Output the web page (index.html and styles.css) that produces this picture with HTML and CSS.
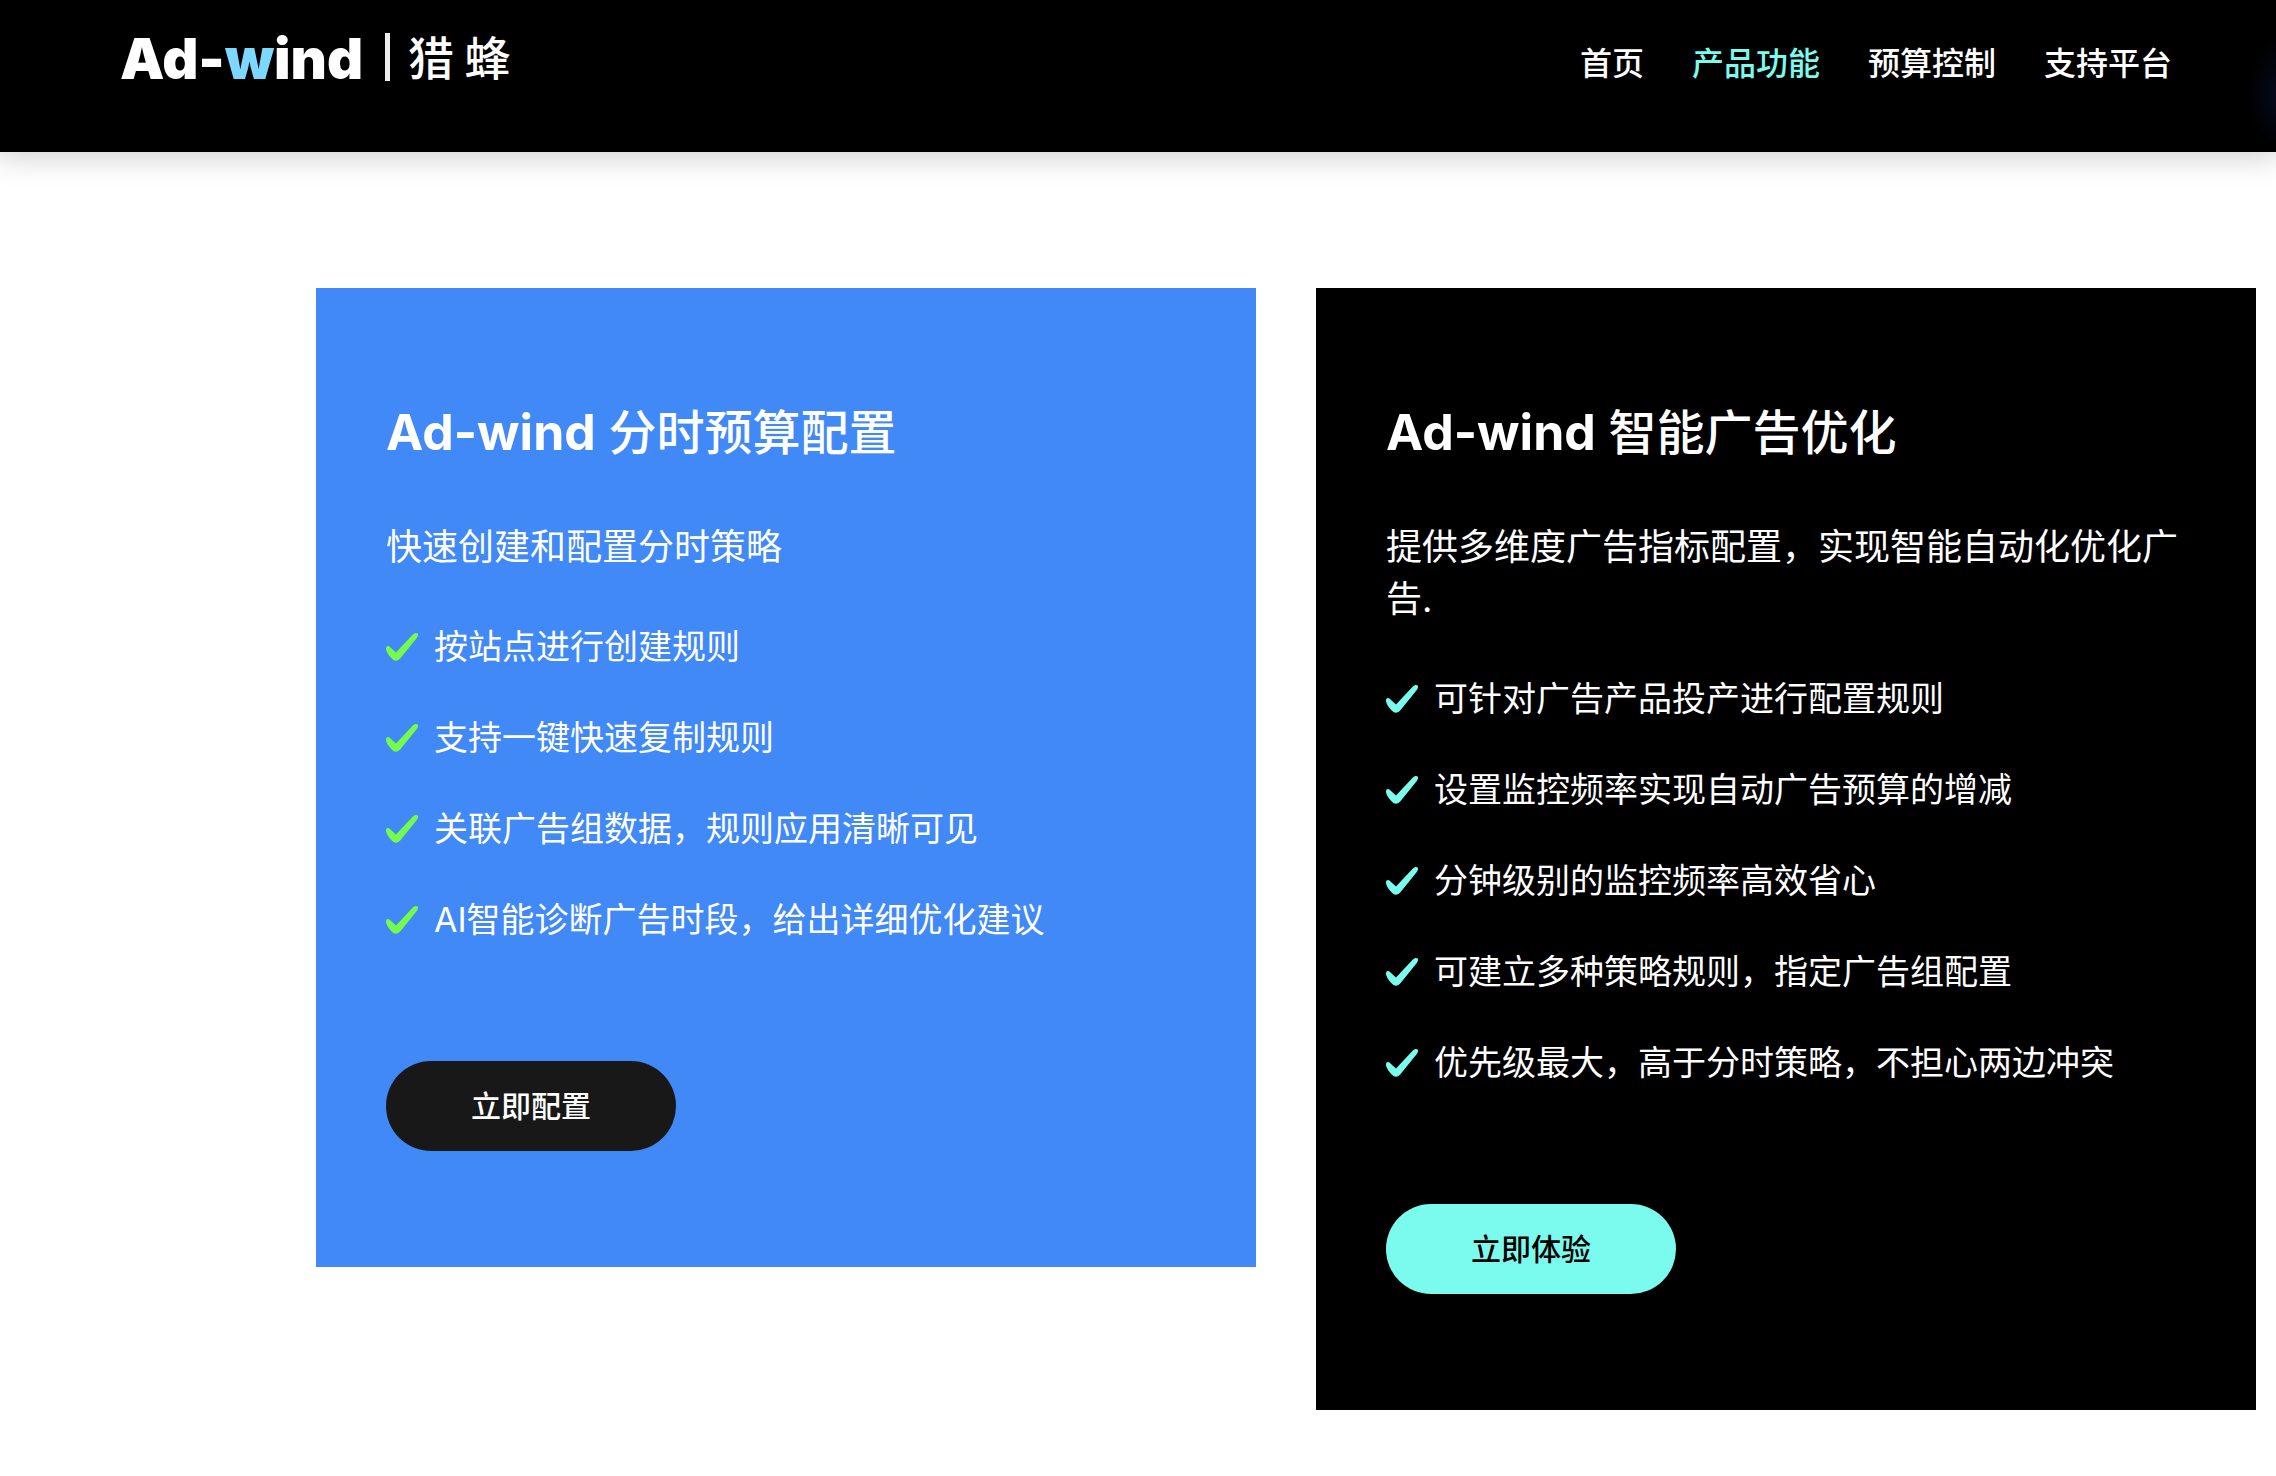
FILE: index.html
```html
<!DOCTYPE html>
<html lang="zh-CN">
<head>
    <meta charset="UTF-8">
    <meta name="viewport" content="width=device-width, initial-scale=1.0">
    <title>Ad-wind | 猎蜂</title>
    <link rel="stylesheet" href="styles.css">
</head>
<body>

    <!-- check icon shared by both lists -->
    <svg class="sprite" aria-hidden="true">
        <symbol id="check" viewBox="0 0 32 28">
            <path d="M0 15.500C0 13 2.400 12.300 4.200 14.200L10 19.600L26.400 2C28.400 .1 30.600-.4 31.600 .6C32.500 1.600 32 3.500 30.600 5.200L14.400 25.200C12.300 27.800 8.600 28.800 6 25.800C3 22.800 0 18.600 0 15.500Z"/>
        </symbol>
    </svg>

    <header class="header">
        <a class="logo" href="#">
            <span class="logo-name">Ad-<span class="logo-w">w</span>ind</span>
            <span class="logo-line"></span>
            <span class="logo-cn">猎 蜂</span>
        </a>
        <nav class="nav">
            <a href="#">首页</a>
            <a href="#" class="active">产品功能</a>
            <a href="#">预算控制</a>
            <a href="#">支持平台</a>
        </nav>
    </header>

    <main class="features">
        <section class="card card-blue">
            <h2><span class="brand">Ad-wind</span> 分时预算配置</h2>
            <p>快速创建和配置分时策略</p>
            <ul>
                <li><svg class="check"><use href="#check"/></svg>按站点进行创建规则</li>
                <li><svg class="check"><use href="#check"/></svg>支持一键快速复制规则</li>
                <li><svg class="check"><use href="#check"/></svg>关联广告组数据，规则应用清晰可见</li>
                <li><svg class="check"><use href="#check"/></svg>AI智能诊断广告时段，给出详细优化建议</li>
            </ul>
            <button type="button">立即配置</button>
        </section>

        <section class="card card-black">
            <h2><span class="brand">Ad-wind</span> 智能广告优化</h2>
            <p>提供多维度广告指标配置，实现智能自动化优化广告.</p>
            <ul>
                <li><svg class="check"><use href="#check"/></svg>可针对广告产品投产进行配置规则</li>
                <li><svg class="check"><use href="#check"/></svg>设置监控频率实现自动广告预算的增减</li>
                <li><svg class="check"><use href="#check"/></svg>分钟级别的监控频率高效省心</li>
                <li><svg class="check"><use href="#check"/></svg>可建立多种策略规则，指定广告组配置</li>
                <li><svg class="check"><use href="#check"/></svg>优先级最大，高于分时策略，不担心两边冲突</li>
            </ul>
            <button type="button">立即体验</button>
        </section>
    </main>

</body>
</html>
```
FILE: styles.css
```css
* {
    box-sizing: border-box;
}
body {
    margin: 0;
    background-color: #fff;
    font-family: Inter, "Noto Sans CJK SC", sans-serif;
    color: #fff;
}
.sprite {
    display: none;
}
.header {
    display: flex;
    justify-content: space-between;
    align-items: flex-start;
    padding: 22px 104px 60px 120px;
    background: radial-gradient(ellipse 28px 56px at 100% 94px, #050a1c, transparent) #000;
    box-shadow: 0 0 30px 4px rgba(0, 0, 0, 0.2);
}
.logo {
    display: flex;
    align-items: center;
    color: #fff;
    text-decoration: none;
    line-height: 66px;
}
.logo-name {
    padding-top: 4px;
    font-size: 56px;
    font-weight: 900;
}
.logo-w {
    color: #7dd8ff;
}
.logo-line {
    width: 5px;
    height: 48px;
    margin: 0 18px 0 22px;
    background-color: #eee;
}
.logo-cn {
    padding-bottom: 4px;
    font-family: "Noto Sans CJK SC", sans-serif;
    font-size: 46px;
    font-weight: 500;
}
.nav {
    display: flex;
    gap: 48px;
    padding-top: 18px;
}
.nav a {
    color: #fff;
    font-size: 32px;
    font-weight: 500;
    line-height: 48px;
    text-decoration: none;
}
.nav a.active {
    color: #7afbee;
}
.features {
    display: grid;
    grid-template-columns: 1fr 1fr;
    gap: 60px;
    align-items: start;
    padding: 136px 20px 66px 316px;
}
.card {
    padding: 108px 70px 116px;
}
.card h2 {
    margin: 0 0 52px;
    font-size: 48px;
    font-weight: 500;
    line-height: 72px;
}
.brand {
    font-size: 50px;
    font-weight: 700;
}
.card p {
    margin: 0 0 48px;
    font-size: 36px;
    line-height: 52px;
}
.card ul {
    display: grid;
    gap: 40px;
    margin: 0 0 116px;
    padding: 0;
    list-style: none;
}
.card li {
    display: flex;
    align-items: center;
    gap: 16px;
    font-size: 34px;
    line-height: 51px;
}
.check {
    width: 32px;
    height: 28px;
    flex-shrink: 0;
}
.card button {
    display: block;
    width: 290px;
    height: 90px;
    padding: 0 0 4px;
    border: none;
    border-radius: 45px;
    font-family: inherit;
    font-size: 30px;
    font-weight: 500;
    cursor: pointer;
}
.card-blue {
    background-color: #4189f7;
}
.card-blue .check {
    fill: #75fb4c;
}
.card-blue button {
    background-color: #181818;
    color: #fff;
}
.card-black {
    background-color: #000;
}
.card-black .check {
    fill: #7afbee;
}
.card-black button {
    background-color: #7afbee;
    color: #000;
}
```
